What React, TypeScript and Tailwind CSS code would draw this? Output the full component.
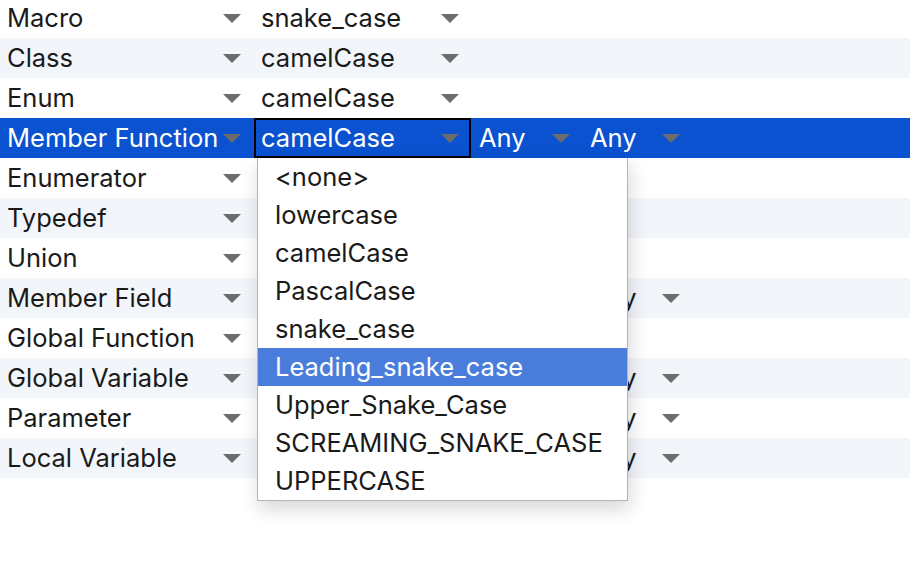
import React from "react";

type Row = { label: string; value?: string; any?: boolean; anyHidden?: boolean };

const rows: Row[] = [
  { label: "Macro", value: "snake_case" },
  { label: "Class", value: "camelCase" },
  { label: "Enum", value: "camelCase" },
  { label: "Member Function", value: "camelCase", any: true },
  { label: "Enumerator" },
  { label: "Typedef" },
  { label: "Union" },
  { label: "Member Field", anyHidden: true },
  { label: "Global Function" },
  { label: "Global Variable", anyHidden: true },
  { label: "Parameter", anyHidden: true },
  { label: "Local Variable", anyHidden: true },
];

const options = [
  "<none>",
  "lowercase",
  "camelCase",
  "PascalCase",
  "snake_case",
  "Leading_snake_case",
  "Upper_Snake_Case",
  "SCREAMING_SNAKE_CASE",
  "UPPERCASE",
];

function Arrow() {
  return (
    <svg width="18" height="9" viewBox="0 0 18 9" className="shrink-0">
      <polygon points="0,0 18,0 9,9" fill="#6c6c6c" />
    </svg>
  );
}

function Popup() {
  return (
    <div className="absolute left-px top-[38px] z-10 w-[371px] border-x border-b border-[#b4b4b4] bg-white shadow-[2px_8px_18px_rgba(0,0,0,0.16)]">
      {options.map((o) => {
        const hi = o === "Leading_snake_case";
        return (
          <div
            key={o}
            className={`flex h-[38px] items-center pl-[17px] ${hi ? "bg-[#4a7ddb] text-white" : "text-[#1a1a1a]"}`}
          >
            {o}
          </div>
        );
      })}
    </div>
  );
}

export default function App() {
  return (
    <div className="h-[572px] w-[910px] overflow-hidden bg-white font-['Inter',sans-serif] text-[25.5px] text-[#1a1a1a]">
      <div className="-mt-[2px] flex flex-col">
        {rows.map((r, i) => {
          const sel = i === 3;
          const bg = sel ? "bg-[#0a52cf] text-white" : i % 2 === 1 ? "bg-[#f2f5f9]" : "bg-white";
          return (
            <div key={r.label} className={`flex h-[40px] items-center ${bg}`}>
              <div className="flex h-full w-[254px] items-center justify-between pl-[7px] pr-[13px]">
                <span className="whitespace-nowrap">{r.label}</span>
                <Arrow />
              </div>
              {sel ? (
                <div className="relative flex h-full w-[217px] items-center justify-between border-2 border-black pl-[5px] pr-[10px]">
                  <span>{r.value}</span>
                  <Arrow />
                  <Popup />
                </div>
              ) : (
                <div className="flex h-full w-[217px] items-center justify-between pl-[7px] pr-[12px]">
                  <span>{r.value}</span>
                  <Arrow />
                </div>
              )}
              {r.any && (
                <>
                  <div className="flex h-full w-[111px] items-center justify-between pl-[8px] pr-[12px]">
                    <span>Any</span>
                    <Arrow />
                  </div>
                  <div className="flex h-full w-[110px] items-center justify-between pl-[8px] pr-[12px]">
                    <span>Any</span>
                    <Arrow />
                  </div>
                </>
              )}
              {r.anyHidden && (
                <>
                  <div className="h-full w-[111px]" />
                  <div className="flex h-full w-[110px] items-center justify-between pl-[8px] pr-[12px]">
                    <span>Any</span>
                    <Arrow />
                  </div>
                </>
              )}
            </div>
          );
        })}
      </div>
    </div>
  );
}
